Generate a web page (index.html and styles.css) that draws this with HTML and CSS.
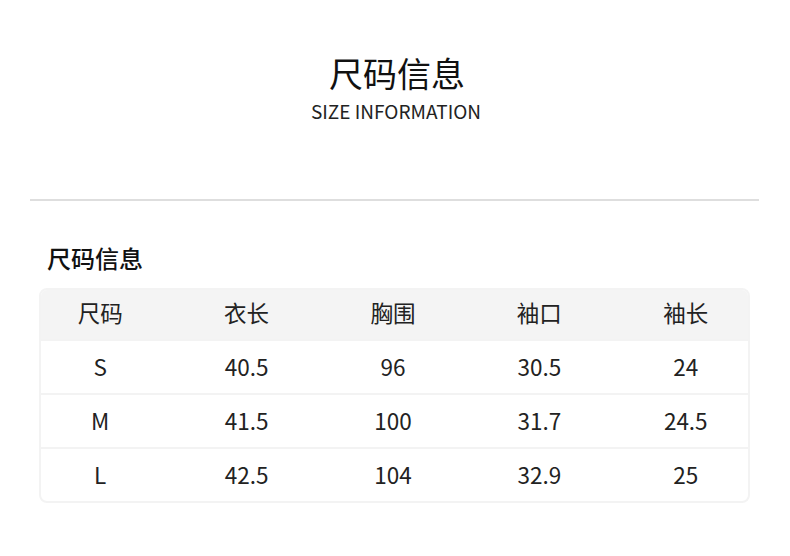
FILE: index.html
```html
<!DOCTYPE html>
<html lang="zh">
<head>
<meta charset="utf-8">
<link rel="stylesheet" href="styles.css">
</head>
<body>
<div class="page">
  <header class="hero">
    <h1 class="hero-title">尺码信息</h1>
    <p class="hero-sub">SIZE INFORMATION</p>
  </header>
  <hr class="rule">
  <h2 class="section-title">尺码信息</h2>
  <div class="table">
    <div class="row head"><span>尺码</span><span>衣长</span><span>胸围</span><span>袖口</span><span>袖长</span></div>
    <div class="row"><span>S</span><span>40.5</span><span>96</span><span>30.5</span><span>24</span></div>
    <div class="row"><span>M</span><span>41.5</span><span>100</span><span>31.7</span><span>24.5</span></div>
    <div class="row"><span>L</span><span>42.5</span><span>104</span><span>32.9</span><span>25</span></div>
  </div>
</div>
</body>
</html>
```
FILE: styles.css
```css
* { box-sizing: border-box; }
html, body { margin: 0; padding: 0; background: #fff; }
body {
  font-family: "Noto Sans CJK SC", "Noto Sans", sans-serif;
  color: #1a1a1a;
  width: 790px;
  height: 556px;
  overflow: hidden;
}
.page { padding-top: 48px; }
.hero { text-align: center; }
.hero-title {
  margin: 0;
  font-size: 34px;
  font-weight: 400;
  line-height: 50px;
  color: #111;
  padding-left: 4px;
}
.hero-sub {
  margin: 0;
  font-size: 19px;
  line-height: 26px;
  color: #222;
  padding-left: 2px;
}
.rule {
  border: 0;
  height: 2px;
  background: #dedede;
  margin: 75px 31px 0 30px;
}
.section-title {
  margin: 40px 0 0 47px;
  font-size: 24px;
  font-weight: 500;
  line-height: 34px;
  color: #111;
}
.table {
  margin: 13px 40px 0 39px;
  border: 2px solid #f3f3f3;
  border-radius: 8px;
  overflow: hidden;
  height: 215px;
}
.row {
  display: grid;
  grid-template-columns: repeat(5, 146.4px);
  margin-left: -14px;
  height: 54px;
  border-top: 2px solid #f3f3f3;
  align-items: center;
  padding-bottom: 3px;
}
.row.head {
  background: #f4f4f4;
  border-top: 0;
  height: 49px;
  padding-bottom: 5px;
}
.row span {
  text-align: center;
  font-size: 22.5px;
  line-height: 30px;
  color: #222;
}
```
